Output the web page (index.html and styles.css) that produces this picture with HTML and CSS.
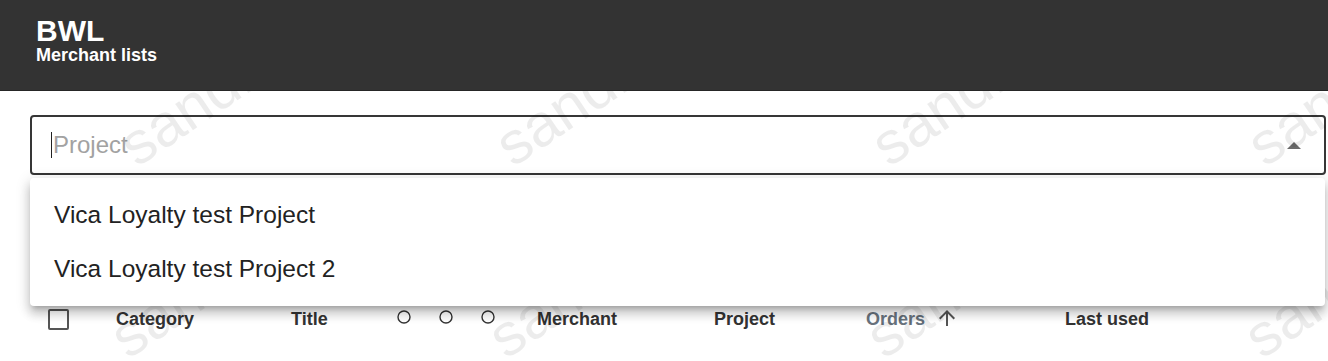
FILE: index.html
```html
<!DOCTYPE html>
<html lang="en">
<head>
<meta charset="utf-8">
<title>BWL - Merchant lists</title>
<link rel="stylesheet" href="styles.css">
</head>
<body>
<header class="appbar">
  <div class="brand">BWL</div>
  <div class="subtitle">Merchant lists</div>
</header>
<main class="content">
  <div class="select">
    <div class="select-field">
      <span class="caret"></span>
      <span class="placeholder">Project</span>
      <svg class="drop-arrow" width="14" height="7" viewBox="0 0 14 7"><polygon points="0,7 7,0 14,7"/></svg>
    </div>
    <ul class="menu">
      <li class="menu-item">Vica Loyalty test Project</li>
      <li class="menu-item">Vica Loyalty test Project 2</li>
    </ul>
  </div>
  <div class="table-head">
    <div class="cell"><span class="checkbox"></span></div>
    <div class="cell">Category</div>
    <div class="cell">Title</div>
    <div class="cell circles">
      <svg width="14" height="14" viewBox="0 0 14 14"><circle cx="7" cy="7" r="6"/></svg>
      <svg width="14" height="14" viewBox="0 0 14 14"><circle cx="7" cy="7" r="6"/></svg>
      <svg width="14" height="14" viewBox="0 0 14 14"><circle cx="7" cy="7" r="6"/></svg>
    </div>
    <div class="cell">Merchant</div>
    <div class="cell">Project</div>
    <div class="cell sorted">Orders<svg class="sort-icon" width="24" height="24" viewBox="0 0 24 24"><path d="M4 12l1.41 1.41L11 7.83V20h2V7.83l5.58 5.59L20 12l-8-8-8 8z"/></svg></div>
    <div class="cell">Last used</div>
  </div>
</main>
<div class="watermark" aria-hidden="true">
  <span class="wm wm-1">sandbox</span>
  <span class="wm wm-2">sandbox</span>
  <span class="wm wm-3">sandbox</span>
  <span class="wm wm-4">sandbox</span>
  <span class="wm wm-5">sandbox</span>
  <span class="wm wm-6">sandbox</span>
  <span class="wm wm-7">sandbox</span>
  <span class="wm wm-8">sandbox</span>
</div>
</body>
</html>
```

FILE: styles.css
```css
html, body {
  margin: 0;
  padding: 0;
  height: 100%;
}

body {
  position: relative;
  overflow: hidden;
  background: #ffffff;
  font-family: "Liberation Sans", Arial, sans-serif;
  color: #222;
}

.appbar {
  position: relative;
  z-index: 2;
  box-sizing: border-box;
  height: 91px;
  padding: 17px 0 0 36px;
  background: #333333;
  border-bottom: 1px solid #262626;
  color: #ffffff;
}

.brand {
  font-size: 30px;
  line-height: 28px;
  font-weight: 700;
}

.subtitle {
  font-size: 18px;
  line-height: 20px;
  font-weight: 700;
}

.content {
  padding: 24px 2px 0 30px;
}

.select {
  position: relative;
}

.select-field {
  box-sizing: border-box;
  height: 60px;
  display: flex;
  align-items: center;
  padding-left: 19px;
  border: 2px solid #363636;
  border-radius: 4px;
  background: #ffffff;
}

.caret {
  width: 1px;
  height: 26px;
  margin-right: 1px;
  background: #222;
}

.placeholder {
  font-size: 24px;
  line-height: 28px;
  color: #a2a2a2;
}

.drop-arrow {
  margin-left: auto;
  margin-right: 23px;
  fill: #6a6a6a;
}

.menu {
  position: absolute;
  z-index: 3;
  top: calc(100% + 3px);
  left: 0;
  right: 1px;
  margin: 0;
  padding: 10px 0;
  list-style: none;
  background: #ffffff;
  border-radius: 4px;
  box-shadow: 0 5px 5px -3px rgba(0, 0, 0, 0.2), 0 8px 10px 1px rgba(0, 0, 0, 0.14), 0 3px 14px 2px rgba(0, 0, 0, 0.12);
}

.menu-item {
  height: 54px;
  line-height: 54px;
  padding-left: 24px;
  font-size: 24.5px;
  color: #222;
}

.table-head {
  display: grid;
  grid-template-columns: 68px 175px 106px 140px 177px 152px 199px auto;
  margin-top: 132px;
  padding-left: 18px;
  height: 24px;
  line-height: 24px;
  font-size: 18px;
  font-weight: 700;
  color: #333;
}

.cell {
  display: flex;
  align-items: center;
  white-space: nowrap;
}

.checkbox {
  box-sizing: border-box;
  width: 21px;
  height: 21px;
  border: 2px solid #555;
  border-radius: 2px;
}

.circles {
  align-items: flex-start;
  gap: 28px;
  padding-top: 3px;
}

.circles svg {
  fill: none;
  stroke: #333;
  stroke-width: 1.4;
}

.sorted {
  color: #68737d;
}

.sort-icon {
  margin-left: 10px;
  margin-top: -3px;
  fill: #555;
}

.watermark {
  position: absolute;
  z-index: 1;
  top: 0;
  left: 0;
  right: 0;
  bottom: 0;
  pointer-events: none;
  overflow: hidden;
}

.wm {
  position: absolute;
  font-family: "Liberation Sans", Arial, sans-serif;
  font-size: 60px;
  line-height: 1;
  color: rgba(0, 0, 0, 0.075);
  white-space: nowrap;
  transform-origin: 0 49.85px;
  transform: rotate(-34deg);
}

.wm-1 { left: 137px; top: 118px; }
.wm-2 { left: 513px; top: 118px; }
.wm-3 { left: 889px; top: 118px; }
.wm-4 { left: 1265px; top: 118px; }
.wm-5 { left: 128px; top: 310px; }
.wm-6 { left: 506px; top: 310px; }
.wm-7 { left: 884px; top: 310px; }
.wm-8 { left: 1262px; top: 310px; }
```
